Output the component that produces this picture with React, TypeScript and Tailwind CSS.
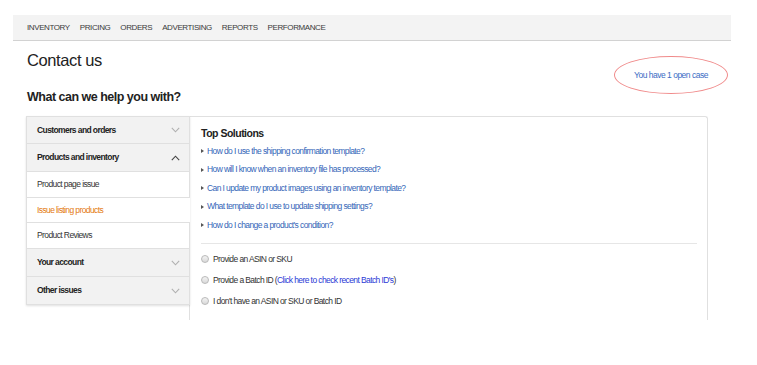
import React from 'react';

const NAV = ['INVENTORY', 'PRICING', 'ORDERS', 'ADVERTISING', 'REPORTS', 'PERFORMANCE'];

const SOLUTIONS = [
  'How do I use the shipping confirmation template?',
  'How will I know when an inventory file has processed?',
  'Can I update my product images using an inventory template?',
  'What template do I use to update shipping settings?',
  "How do I change a product's condition?",
];

const Chevron = ({ up }: { up?: boolean }) => (
  <svg width="9" height="6" viewBox="0 0 9 6" className="flex-none">
    <path
      d={up ? 'M0.8 5.2 L4.5 1.2 L8.2 5.2' : 'M0.8 0.8 L4.5 4.8 L8.2 0.8'}
      fill="none"
      stroke={up ? '#444' : '#b0b0b0'}
      strokeWidth="1.1"
    />
  </svg>
);

const Radio = () => (
  <span className="w-[8px] h-[8px] rounded-full border border-[#b9b9b9] bg-gradient-to-b from-[#f4f4f4] to-[#d9d9d9] flex-none" />
);

const App: React.FC = () => {
  return (
    <div
      className="w-[757px] h-[365px] bg-white overflow-hidden text-[#333]"
      style={{ fontFamily: '"Liberation Sans", Arial, sans-serif' }}
    >
      {/* top nav */}
      <nav className="mt-[15px] ml-[13px] w-[718px] h-[26px] bg-[#f3f3f3] border-b border-[#d2d2d2] flex items-center gap-[10px] pl-[14px] text-[8px] tracking-[-0.4px] font-medium text-[#3a3a3a]">
        {NAV.map(n => (
          <span key={n}>{n}</span>
        ))}
      </nav>

      <div className="pl-[27px] pr-[29px] flex justify-between">
        <div>
          <h1 className="mt-[9px] text-[16.5px] leading-[20px] tracking-[-0.4px] text-[#222]">Contact us</h1>
          <h2 className="mt-[19px] text-[12.5px] leading-[16px] tracking-[-0.5px] font-bold text-[#222]">What can we help you with?</h2>
        </div>
        <div className="mt-[15px] w-[114px] h-[38px] rounded-[50%] border border-[#f08a8a] flex items-center justify-center text-[8.5px] tracking-[-0.5px] text-[#3a6cc4]">
          You have 1 open case
        </div>
      </div>

      <div className="mt-[11px] ml-[26px] flex items-start">
        {/* sidebar */}
        <div className="w-[164px] flex-none relative z-10 text-[8.5px] tracking-[-0.6px] shadow-[0_1px_2px_rgba(0,0,0,0.12)]">
          <div className="h-[28px] bg-[#f2f2f2] border border-[#e0e0e0] flex items-center justify-between pl-[10px] pr-[9px] font-bold text-[#222]">
            <span>Customers and orders</span>
            <Chevron />
          </div>
          <div className="h-[28px] bg-[#f2f2f2] border-x border-b border-[#e0e0e0] flex items-center justify-between pl-[10px] pr-[9px] font-bold text-[#222]">
            <span>Products and inventory</span>
            <Chevron up />
          </div>
          <div className="h-[26px] bg-white border-x border-b border-[#e0e0e0] flex items-center pl-[10px] text-[#333]">
            Product page issue
          </div>
          <div className="h-[25px] bg-white border-l border-b border-[#e0e0e0] flex items-center pl-[10px] text-[#e47911]">
            Issue listing products
          </div>
          <div className="h-[26px] bg-white border-x border-b border-[#e0e0e0] flex items-center pl-[10px] text-[#333]">
            Product Reviews
          </div>
          <div className="h-[28px] bg-[#f2f2f2] border-x border-b border-[#e0e0e0] flex items-center justify-between pl-[10px] pr-[9px] font-bold text-[#222]">
            <span>Your account</span>
            <Chevron />
          </div>
          <div className="h-[28px] bg-[#f2f2f2] border-x border-b border-[#e0e0e0] flex items-center justify-between pl-[10px] pr-[9px] font-bold text-[#222]">
            <span>Other issues</span>
            <Chevron />
          </div>
        </div>

        {/* solutions panel */}
        <div className="-ml-px w-[519px] h-[204px] border-x border-t border-[#e0e0e0] rounded-tr-[3px] bg-white">
          <div className="px-[11px] pt-[9px]">
            <h3 className="text-[10.5px] leading-[14px] tracking-[-0.5px] font-bold text-[#222]">Top Solutions</h3>
            <ul className="mt-[2px]">
              {SOLUTIONS.map(s => (
                <li key={s} className="h-[18.5px] flex items-center gap-[3px] text-[8.5px] tracking-[-0.6px] text-[#3466b8]">
                  <span className="w-0 h-0 border-y-[2.5px] border-y-transparent border-l-[3px] border-l-[#555]" />
                  <span>{s}</span>
                </li>
              ))}
            </ul>
            <div className="mt-[8px] mr-[-1px] border-t border-[#e6e6e6]" />
            <div className="mt-[5px] text-[8.5px] tracking-[-0.6px] text-[#333]">
              <label className="h-[21px] flex items-center gap-[4px]">
                <Radio />
                <span>Provide an ASIN or SKU</span>
              </label>
              <label className="h-[21px] flex items-center gap-[4px]">
                <Radio />
                <span>
                  Provide a Batch ID (<span className="text-[#2a3ad6]">Click here to check recent Batch ID's</span>)
                </span>
              </label>
              <label className="h-[21px] flex items-center gap-[4px]">
                <Radio />
                <span>I don't have an ASIN or SKU or Batch ID</span>
              </label>
            </div>
          </div>
        </div>
      </div>
    </div>
  );
};

export default App;
